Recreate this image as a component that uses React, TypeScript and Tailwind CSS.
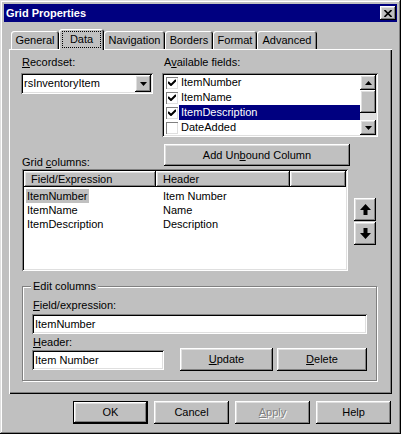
import type { ReactNode } from "react";

const RAISED =
  "shadow-[inset_-1px_-1px_#000,inset_1px_1px_#fff,inset_-2px_-2px_#808080,inset_2px_2px_#dfdfdf]";
const SUNKEN =
  "shadow-[inset_1px_1px_#808080,inset_-1px_-1px_#fff,inset_2px_2px_#000,inset_-2px_-2px_#dfdfdf]";

function U({ children }: { children: ReactNode }) {
  return <span className="underline underline-offset-[1px]">{children}</span>;
}

function Button({
  children,
  w,
  isDefault,
  disabled,
}: {
  children: ReactNode;
  w: string;
  isDefault?: boolean;
  disabled?: boolean;
}) {
  return (
    <div
      className={`${w} h-[23px] flex items-center justify-center bg-[#c0c0c0] ${
        isDefault
          ? "border border-black shadow-[inset_-1px_-1px_#000,inset_1px_1px_#fff,inset_-2px_-2px_#808080,inset_2px_2px_#dfdfdf]"
          : RAISED
      } ${disabled ? "text-[#808080] [text-shadow:1px_1px_0_#fff]" : ""}`}
    >
      {children}
    </div>
  );
}

function Check({ on }: { on: boolean }) {
  return (
    <div className="w-[12px] h-[12px] bg-white shadow-[inset_1px_1px_#808080,inset_-1px_-1px_#dfdfdf] flex items-center justify-center shrink-0">
      {on && (
        <svg width="8" height="7" viewBox="0 0 8 7">
          <path d="M0 3 L3 6 L8 1" stroke="#000" strokeWidth="2" fill="none" />
        </svg>
      )}
    </div>
  );
}

function Tri({ up }: { up?: boolean }) {
  return (
    <svg width="7" height="4" viewBox="0 0 7 4">
      <polygon points={up ? "3.5,0 7,4 0,4" : "0,0 7,0 3.5,4"} fill="#000" />
    </svg>
  );
}

function Arrow({ up }: { up?: boolean }) {
  return (
    <svg width="11" height="11" viewBox="0 0 11 11" className={up ? "" : "rotate-180"}>
      <polygon points="5.5,0 11,6 7.5,6 7.5,11 3.5,11 3.5,6 0,6" fill="#000" />
    </svg>
  );
}

const TABS: { name: string; w: string }[] = [
  { name: "General", w: "w-[48px]" },
  { name: "Data", w: "w-[45px]" },
  { name: "Navigation", w: "w-[61px]" },
  { name: "Borders", w: "w-[48px]" },
  { name: "Format", w: "w-[44px]" },
  { name: "Advanced", w: "w-[60px]" },
];

const FIELDS = [
  { name: "ItemNumber", on: true },
  { name: "ItemName", on: true },
  { name: "ItemDescription", on: true, sel: true },
  { name: "DateAdded", on: false },
];

const COLUMNS = [
  ["ItemNumber", "Item Number"],
  ["ItemName", "Name"],
  ["ItemDescription", "Description"],
];

export default function App() {
  return (
    <div className="w-[401px] h-[434px] bg-[#c0c0c0] p-[4px] flex flex-col font-['Liberation_Sans','Arial',sans-serif] text-[11px] leading-[13px] text-black select-none shadow-[inset_-1px_-1px_#000,inset_1px_1px_#dfdfdf,inset_-2px_-2px_#808080,inset_2px_2px_#fff]">
      {/* Title bar */}
      <div className="h-[18px] bg-[#000080] flex items-center pl-[2px] pr-[1px]">
        <span className="text-white font-bold">Grid Properties</span>
        <div className={`ml-auto w-[16px] h-[14px] bg-[#c0c0c0] ${RAISED} flex items-center justify-center`}>
          <svg width="8" height="7" viewBox="0 0 8 7">
            <path d="M0.5 0 L7.5 7 M7.5 0 L0.5 7" stroke="#000" strokeWidth="1.6" />
          </svg>
        </div>
      </div>

      <div className="pl-[5px] pr-[6px] mt-[7px]">
        {/* Tabs */}
        <div className="flex items-end h-[20px] pl-[2px]">
          {TABS.map((t) =>
            t.name === "Data" ? (
              <div
                key={t.name}
                className={`${t.w} h-[21px] -mb-[1px] relative z-10 bg-[#c0c0c0] rounded-t-[3px] shadow-[inset_1px_1px_#fff,inset_-1px_0_#000,inset_-2px_0_#808080] flex items-start justify-center pt-[2px]`}
              >
                <span className="border border-dotted border-black px-[7px] h-[17px] flex items-center">
                  {t.name}
                </span>
              </div>
            ) : (
              <div
                key={t.name}
                className={`${t.w} h-[18px] bg-[#c0c0c0] rounded-t-[3px] shadow-[inset_1px_1px_#fff,inset_-1px_0_#000,inset_-2px_0_#808080] flex items-center justify-center pt-[1px]`}
              >
                {t.name}
              </div>
            )
          )}
        </div>

        {/* Tab panel */}
        <div className="w-[383px] h-[345px] bg-[#c0c0c0] shadow-[inset_1px_1px_#fff,inset_-1px_-1px_#000,inset_-2px_-2px_#808080] pt-[7px] pl-[12px]">
          <div className="flex">
            <div className="w-[132px]">
              <div className="pl-[1px] h-[13px]">
                <U>R</U>ecordset:
              </div>
              <div className={`mt-[4px] h-[21px] bg-white ${SUNKEN} p-[2px] flex items-center`}>
                <span className="flex-1 pl-[1px]">rsInventoryItem</span>
                <div className={`w-[16px] h-[17px] bg-[#c0c0c0] ${RAISED} flex items-center justify-center`}>
                  <Tri />
                </div>
              </div>
            </div>

            <div className="ml-[9px] w-[216px]">
              <div className="pl-[2px] h-[13px]">
                A<U>v</U>ailable fields:
              </div>
              <div className={`mt-[4px] h-[64px] bg-white ${SUNKEN} p-[2px] flex`}>
                <div className="flex-1 flex flex-col">
                  {FIELDS.map((f) => (
                    <div key={f.name} className="h-[15px] flex items-center pl-[2px]">
                      <Check on={f.on} />
                      <span
                        className={`ml-[1px] flex-1 h-[15px] pl-[2px] flex items-center ${
                          f.sel ? "bg-[#000080] text-white" : ""
                        }`}
                      >
                        {f.name}
                      </span>
                    </div>
                  ))}
                </div>
                <div className="w-[16px] flex flex-col">
                  <div className={`h-[15px] bg-[#c0c0c0] ${RAISED} flex items-center justify-center`}>
                    <Tri up />
                  </div>
                  <div className={`h-[23px] bg-[#c0c0c0] ${RAISED}`} />
                  <div className="h-[7px] bg-[#e0e0e0]" />
                  <div className={`h-[15px] bg-[#c0c0c0] ${RAISED} flex items-center justify-center`}>
                    <Tri />
                  </div>
                </div>
              </div>
            </div>
          </div>

          {/* Grid columns label + Add Unbound Column */}
          <div className="mt-[7px] h-[25px] flex">
            <div className="w-[143px] pl-[1px] self-end">
              Grid <U>c</U>olumns:
            </div>
            <Button w="w-[186px] !h-[22px]">
              Add Un<U>b</U>ound Column
            </Button>
          </div>

          {/* Grid list + arrows */}
          <div className="flex">
            <div className={`ml-[1px] w-[326px] h-[102px] bg-white ${SUNKEN} p-[2px]`}>
              <div className="flex h-[16px]">
                <div className={`w-[132px] bg-[#c0c0c0] ${RAISED} pl-[7px] flex items-center`}>
                  Field/Expression
                </div>
                <div className={`w-[134px] bg-[#c0c0c0] ${RAISED} pl-[7px] flex items-center`}>
                  Header
                </div>
                <div className={`flex-1 bg-[#c0c0c0] ${RAISED}`} />
              </div>
              <div className="mt-[2px]">
                {COLUMNS.map(([f, h], i) => (
                  <div key={f} className="h-[14px] flex items-center pl-[2px]">
                    <div className="w-[137px]">
                      <span className={`px-[1px] h-[14px] inline-flex items-center ${i === 0 ? "bg-[#c0c0c0]" : ""}`}>
                        {f}
                      </span>
                    </div>
                    <span>{h}</span>
                  </div>
                ))}
              </div>
            </div>
            <div className="ml-[6px] mt-[29px] flex flex-col gap-[1px]">
              <div className={`w-[22px] h-[23px] bg-[#c0c0c0] ${RAISED} flex items-center justify-center`}>
                <Arrow up />
              </div>
              <div className={`w-[22px] h-[23px] bg-[#c0c0c0] ${RAISED} flex items-center justify-center`}>
                <Arrow />
              </div>
            </div>
          </div>

          {/* Edit columns group */}
          <div className="relative mt-[15px] ml-[1px] w-[355px] h-[95px] border border-[#808080] shadow-[inset_1px_1px_#fff,1px_1px_#fff] pt-[12px] pl-[9px]">
            <span className="absolute -top-[7px] left-[8px] px-[2px] bg-[#c0c0c0]">Edit columns</span>
            <div className="pl-[1px] h-[13px]">
              <U>F</U>ield/expression:
            </div>
            <div className={`mt-[2px] w-[335px] h-[20px] bg-white ${SUNKEN} pl-[3px] flex items-center`}>
              ItemNumber
            </div>
            <div className="flex items-end mt-[2px]">
              <div>
                <div className="pl-[1px] h-[14px]">
                  <U>H</U>eader:
                </div>
                <div className={`w-[132px] h-[20px] bg-white ${SUNKEN} pl-[3px] flex items-center`}>
                  Item Number
                </div>
              </div>
              <div className="ml-[16px] -mb-[1px] flex gap-[4px]">
                <Button w="w-[93px]">
                  <U>U</U>pdate
                </Button>
                <Button w="w-[90px]">
                  <U>D</U>elete
                </Button>
              </div>
            </div>
          </div>
        </div>

        {/* Dialog buttons */}
        <div className="mt-[7px] flex justify-end gap-[6px]">
          <Button w="w-[75px]" isDefault>
            OK
          </Button>
          <Button w="w-[75px]">Cancel</Button>
          <Button w="w-[75px]" disabled>
            <U>A</U>pply
          </Button>
          <Button w="w-[75px]">Help</Button>
        </div>
      </div>
    </div>
  );
}
